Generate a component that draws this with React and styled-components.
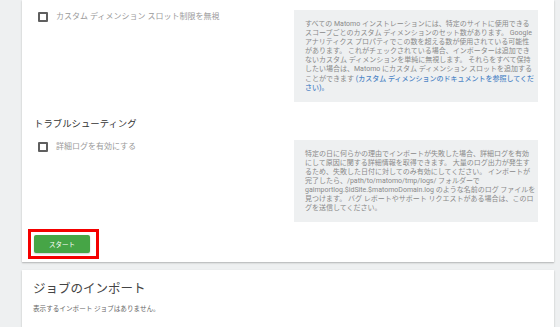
import React from "react";
import styled, { createGlobalStyle } from "styled-components";

const Global = createGlobalStyle`
  html, body { margin: 0; padding: 0; background: #eef0f1; }
  body { font-family: Roboto, "Noto Sans CJK JP", sans-serif; }
  #root { width: 560px; height: 327px; overflow: hidden; }
`;

const Page = styled.div`
  padding: 0 6px 0 22px;
  display: flex;
  flex-direction: column;
  gap: 8px;
`;

const Card = styled.section`
  background: #fff;
  box-shadow: 0 1px 2px rgba(0, 0, 0, 0.18), 0 1px 1px rgba(0, 0, 0, 0.08);
  padding: ${(p) => p.$pad};
`;

const Row = styled.div`
  display: grid;
  grid-template-columns: 260px 244px;
  margin-top: ${(p) => p.$mt || 0}px;
`;

const OptionCell = styled.div`
  padding: 2px 0 0 4px;
`;

const CheckLabel = styled.label`
  display: flex;
  align-items: center;
  gap: 8px;
  font-size: 8px;
  line-height: 10px;
  color: #9a9a9a;
`;

const Box = styled.span`
  width: 10px;
  height: 10px;
  box-sizing: border-box;
  border: 2px solid #5f5f5f;
  border-radius: 1px;
  flex: none;
`;

const Info = styled.div`
  background: #eef0f1;
  padding: 10px 11px 9px;
  font-size: 7px;
  line-height: 9.1px;
  color: #8a8a8a;
  white-space: nowrap;
`;

const Link = styled.span`
  color: #4f86c6;
  font-weight: 500;
`;

const SectionTitle = styled.h3`
  margin: 16px 0 0;
  font-size: 9.4px;
  line-height: 12px;
  font-weight: 400;
  color: #333;
`;

const Actions = styled.div`
  margin-top: 10px;
  padding-left: 0;
`;

const ButtonWrap = styled.div`
  position: relative;
  display: inline-block;
`;

const StartButton = styled.button`
  display: block;
  width: 56px;
  height: 18px;
  border: none;
  border-radius: 2px;
  background: #46a546;
  color: #fff;
  font-family: inherit;
  font-size: 6.5px;
  padding: 0;
  box-shadow: 0 1px 2px rgba(0, 0, 0, 0.2);
`;

const Highlight = styled.span`
  position: absolute;
  left: -6px;
  top: -6px;
  width: 71px;
  height: 30px;
  box-sizing: border-box;
  border: 3px solid #f40000;
  pointer-events: none;
`;

const JobsTitle = styled.h2`
  margin: 0;
  font-size: 12.5px;
  line-height: 16px;
  font-weight: 400;
  color: #444;
`;

const JobsText = styled.p`
  margin: 7px 0 0;
  font-size: 6.6px;
  line-height: 10px;
  color: #666;
`;

export default function App() {
  return (
    <>
      <Global />
      <Page>
        <Card $pad="10px 16px 9px 12px">
          <Row>
            <OptionCell>
              <CheckLabel>
                <Box />
                カスタム ディメンション スロット制限を無視
              </CheckLabel>
            </OptionCell>
            <Info>
              すべての Matomo インストレーションには、特定のサイトに使用できる
              <br />
              スコープごとのカスタム ディメンションのセット数があります。 Google
              <br />
              アナリティクス プロパティでこの数を超える数が使用されている可能性
              <br />
              があります。 これがチェックされている場合、インポーターは追加でき
              <br />
              ないカスタム ディメンションを単純に無視します。 それらをすべて保持
              <br />
              したい場合は、Matomo にカスタム ディメンション スロットを追加する
              <br />
              ことができます{" "}
              <Link>
                (カスタム ディメンションのドキュメントを参照してくだ
                <br />
                さい)。
              </Link>
            </Info>
          </Row>
          <SectionTitle>トラブルシューティング</SectionTitle>
          <Row $mt={10}>
            <OptionCell>
              <CheckLabel>
                <Box />
                詳細ログを有効にする
              </CheckLabel>
            </OptionCell>
            <Info>
              特定の日に何らかの理由でインポートが失敗した場合、詳細ログを有効
              <br />
              にして原因に関する詳細情報を取得できます。 大量のログ出力が発生す
              <br />
              るため、失敗した日付に対してのみ有効にしてください。 インポートが
              <br />
              完了したら、/path/to/matomo/tmp/logs/ フォルダーで
              <br />
              gaimportlog.$idSite.$matomoDomain.log のような名前のログ ファイルを
              <br />
              見つけます。 バグ レポートやサポート リクエストがある場合は、このロ
              <br />
              グを送信してください。
            </Info>
          </Row>
          <Actions>
            <ButtonWrap>
              <StartButton>スタート</StartButton>
              <Highlight />
            </ButtonWrap>
          </Actions>
        </Card>
        <Card $pad="11px 16px 13px 11px">
          <JobsTitle>ジョブのインポート</JobsTitle>
          <JobsText>表示するインポート ジョブはありません。</JobsText>
        </Card>
      </Page>
    </>
  );
}
